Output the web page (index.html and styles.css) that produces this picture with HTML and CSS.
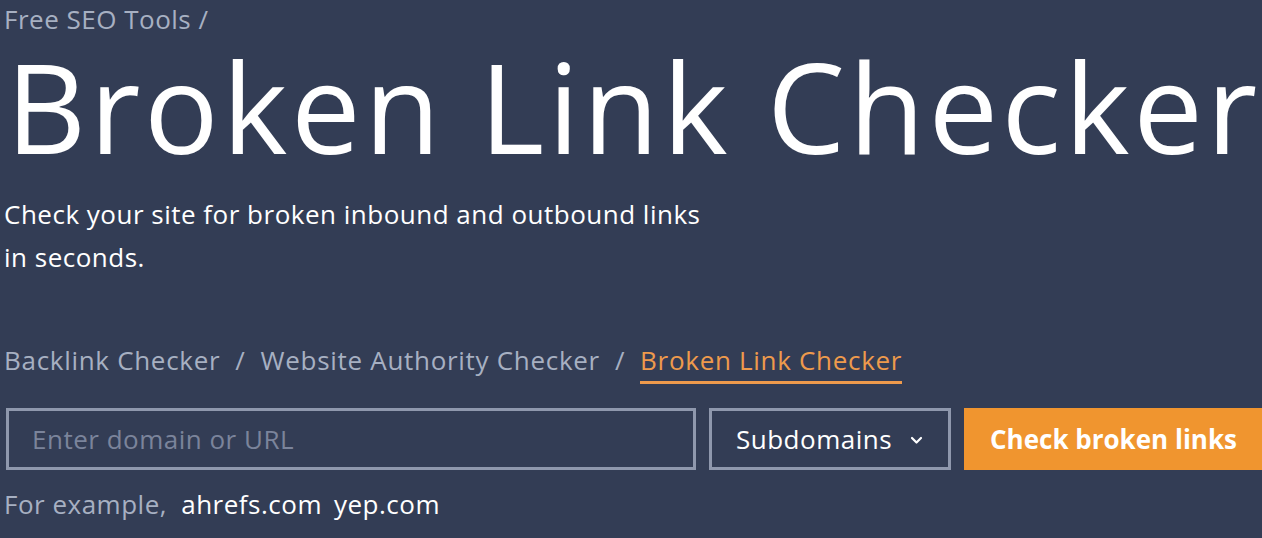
FILE: index.html
```html
<!DOCTYPE html>
<html lang="en">
<head>
<meta charset="utf-8">
<title>Broken Link Checker</title>
<link rel="stylesheet" href="styles.css">
</head>
<body>
<main class="hero">
  <nav class="crumbs">Free SEO Tools /</nav>
  <h1 class="title">Broken Link Checker</h1>
  <p class="lead">Check your site for broken inbound and outbound links<br>in seconds.</p>
  <div class="tabs">
    <a class="tab">Backlink Checker</a>
    <span class="sep">/</span>
    <a class="tab">Website Authority Checker</a>
    <span class="sep">/</span>
    <a class="tab active">Broken Link Checker</a>
  </div>
  <form class="search">
    <input class="field" type="text" placeholder="Enter domain or URL">
    <div class="select">
      <span>Subdomains</span>
      <svg class="chev" width="13" height="9" viewBox="0 0 13 9"><path d="M2 2l4.5 4.5L11 2" fill="none" stroke="#fff" stroke-width="2.2" stroke-linecap="round" stroke-linejoin="round"/></svg>
    </div>
    <button class="go" type="button">Check broken links</button>
  </form>
  <p class="examples">For example, <span class="ex">ahrefs.com</span><span class="ex">yep.com</span></p>
</main>
</body>
</html>
```
FILE: styles.css
```css
html, body {
  margin: 0;
  padding: 0;
  background: #333d55;
  height: 100%;
  overflow: hidden;
}
.hero {
  padding: 2px 0 0 4px;
  font-family: "Open Sans", "Liberation Sans", sans-serif;
  color: #fff;
  letter-spacing: 0.5px;
}
.crumbs {
  font-size: 26px;
  line-height: 34px;
  color: #a7b0c2;
}
.title {
  margin: 0 0 0 2px;
  font-family: "Open Sans", "Liberation Sans", sans-serif;
  font-weight: 400;
  font-size: 124px;
  line-height: 140px;
  letter-spacing: 3.6px;
  white-space: nowrap;
}
.lead {
  margin: 17px 0 0;
  font-size: 26px;
  line-height: 43px;
}
.tabs {
  margin-top: 63px;
  display: flex;
  align-items: flex-start;
  gap: 15px;
  font-size: 26px;
  line-height: 36px;
  letter-spacing: 0.7px;
  color: #a7b0c2;
}
.tab {
  padding-bottom: 3px;
  border-bottom: 3px solid transparent;
}
.tab.active {
  color: #ee9a4c;
  border-bottom-color: #ee9a4c;
}
.search {
  margin-top: 24px;
  display: flex;
  gap: 13px;
  height: 62px;
}
.field {
  box-sizing: border-box;
  width: 690px;
  margin-left: 2px;
  height: 62px;
  border: 3px solid #8f98ad;
  background: transparent;
  padding: 0 23px;
  font-family: inherit;
  font-size: 26px;
  letter-spacing: 0.5px;
  color: #fff;
  outline: none;
}
.field::placeholder {
  color: #7b849b;
}
.select {
  box-sizing: border-box;
  width: 242px;
  height: 62px;
  border: 3px solid #8f98ad;
  display: flex;
  align-items: center;
  padding: 0 24px;
  gap: 18px;
  font-size: 26px;
  font-weight: 500;
}
.chev {
  margin-top: 2px;
}
.go {
  flex: 1;
  height: 62px;
  margin-right: -10px;
  border: 0;
  background: #f0952f;
  color: #fff;
  font-family: inherit;
  font-weight: 700;
  font-size: 26px;
  letter-spacing: 0;
  text-align: left;
  padding: 0 26px;
}
.examples {
  margin: 16px 0 0;
  font-size: 26px;
  line-height: 36px;
  color: #a7b0c2;
}
.ex {
  color: #fff;
  margin-left: 7px;
}
.ex + .ex {
  margin-left: 12px;
}
```
